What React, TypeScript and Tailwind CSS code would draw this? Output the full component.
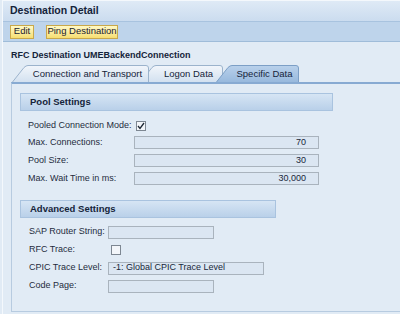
import React from 'react';

const font = "font-['Liberation_Sans',Arial,sans-serif]";

type TabProps = { label: string; width: number; active?: boolean; z: string; ml: string };

const Tab: React.FC<TabProps> = ({ label, width, active, z, ml }) => {
  const w = width;
  const fill = active ? 'url(#tabActive)' : 'url(#tabIdle)';
  const stroke = active ? '#7c9fc6' : '#9bb3cc';
  return (
    <div className={`relative h-[17px] shrink-0 ${z} ${ml}`} style={{ width: w }}>
      <svg className="absolute inset-0" width={w} height={17} viewBox={`0 0 ${w} 17`}>
        <defs>
          <linearGradient id="tabIdle" x1="0" y1="0" x2="0" y2="1">
            <stop offset="0" stopColor="#f2f6fb" />
            <stop offset="1" stopColor="#d3e1f0" />
          </linearGradient>
          <linearGradient id="tabActive" x1="0" y1="0" x2="0" y2="1">
            <stop offset="0" stopColor="#b9d1eb" />
            <stop offset="1" stopColor="#98b9dd" />
          </linearGradient>
        </defs>
        <path
          d={`M0.5 17 L12 2.5 Q14 0.5 16 0.5 L${w - 3} 0.5 Q${w - 0.5} 0.5 ${w - 0.5} 3 L${w - 0.5} 17`}
          fill={fill}
          stroke={stroke}
          strokeWidth="1"
        />
      </svg>
      <span className="relative flex h-full items-center justify-center whitespace-nowrap pl-[14px] pt-[1px] text-[9.5px] text-[#15243a]">
        {label}
      </span>
    </div>
  );
};

const Field: React.FC<{ value?: string; width: string; right?: boolean }> = ({ value = '', width, right }) => (
  <div
    className={`flex h-[13px] shrink-0 ${width} items-center whitespace-nowrap border border-[#a9b3bd] bg-[#dbe6f2] px-[4px] text-[9px] text-[#18263a] ${right ? 'justify-end pr-[12px]' : ''}`}
  >
    {value}
  </div>
);

const Check: React.FC<{ checked?: boolean }> = ({ checked }) => (
  <div className="flex h-[10px] w-[10px] shrink-0 items-center justify-center border border-[#7d8792] bg-[#f3f6fa]">
    {checked && (
      <svg width="8" height="8" viewBox="0 0 8 8">
        <path d="M1 4 L3 6.5 L7 1" fill="none" stroke="#1d2733" strokeWidth="1.3" />
      </svg>
    )}
  </div>
);

const GroupHeader: React.FC<{ title: string; width: string }> = ({ title, width }) => (
  <div
    className={`flex h-[18px] ${width} items-center whitespace-nowrap border border-[#a9c3df] bg-gradient-to-b from-[#d6e5f4] to-[#b9d0e9] pl-[9px] text-[9.5px] font-bold text-[#15243a]`}
  >
    {title}
  </div>
);

const Label: React.FC<{ text: string; width: string }> = ({ text, width }) => (
  <span className={`${width} shrink-0`}>{text}</span>
);

export default function App() {
  return (
    <div className={`h-[314px] w-[400px] overflow-hidden bg-[#e1ebf5] ${font}`}>
      <div className="ml-[2px] flex h-full flex-col border-l border-t border-[#f4f8fc]">
        {/* title bar */}
        <div className="flex h-[21px] items-center whitespace-nowrap border-b border-[#a8c3df] bg-gradient-to-b from-[#dfeaf6] to-[#cbdcef] pl-[7px] text-[10.5px] font-bold text-[#14233a]">
          Destination Detail
        </div>
        {/* toolbar */}
        <div className="flex h-[20px] items-center gap-[12px] border-b border-[#9fbcd9] bg-[#bed4eb] pl-[7px]">
          <button className="flex h-[14px] w-[24px] items-center justify-center whitespace-nowrap border border-[#c9a84a] bg-gradient-to-b from-[#fff9c6] to-[#f6de70] text-[9.5px] text-[#1b2230]">
            Edit
          </button>
          <button className="flex h-[14px] w-[72px] items-center justify-center whitespace-nowrap border border-[#c9a84a] bg-gradient-to-b from-[#fff9c6] to-[#f6de70] text-[9.5px] text-[#1b2230]">
            Ping Destination
          </button>
        </div>

        {/* content */}
        <div className="flex flex-1 flex-col pl-[8px] pt-[7px]">
          <div className="whitespace-nowrap pb-[3px] text-[9px] font-bold leading-[13px] text-[#14233a]">
            RFC Destination UMEBackendConnection
          </div>
          {/* tabs */}
          <div className="flex h-[17px] items-end">
            <Tab label="Connection and Transport" width={137} z="z-[3]" ml="ml-[1px]" />
            <Tab label="Logon Data" width={83} z="z-[2]" ml="-ml-[9px]" />
            <Tab label="Specific Data" width={83} active z="z-[4]" ml="-ml-[7px]" />
          </div>
          {/* panel */}
          <div className="mb-[2px] flex flex-1 flex-col border-b border-l border-t-2 border-b-[#b7cbe0] border-l-[#b7cbe0] border-t-[#87aad2] pb-[10px] pl-[8px] pt-[9px]">
            <GroupHeader title="Pool Settings" width="w-[313px]" />
            <div className="flex flex-col whitespace-nowrap pl-[8px] text-[9px] text-[#1f2c3d]">
              <div className="mt-[7px] flex h-[15px] items-center">
                <Label text="Pooled Connection Mode:" width="w-[108px]" />
                <Check checked />
              </div>
              <div className="mt-[3px] flex h-[13px] items-center">
                <Label text="Max. Connections:" width="w-[106px]" />
                <Field value="70" width="w-[185px]" right />
              </div>
              <div className="mt-[5px] flex h-[13px] items-center">
                <Label text="Pool Size:" width="w-[106px]" />
                <Field value="30" width="w-[185px]" right />
              </div>
              <div className="mt-[5px] flex h-[13px] items-center">
                <Label text="Max. Wait Time in ms:" width="w-[106px]" />
                <Field value="30,000" width="w-[185px]" right />
              </div>
            </div>

            <div className="mt-[15px]">
              <GroupHeader title="Advanced Settings" width="w-[256px]" />
            </div>
            <div className="flex flex-col whitespace-nowrap pl-[9px] text-[9px] text-[#1f2c3d]">
              <div className="mt-[7px] flex h-[14px] items-center">
                <Label text="SAP Router String:" width="w-[79px]" />
                <Field width="w-[106px]" />
              </div>
              <div className="mt-[4px] flex h-[14px] items-center">
                <Label text="RFC Trace:" width="w-[82px]" />
                <Check />
              </div>
              <div className="mt-[4px] flex h-[14px] items-center">
                <Label text="CPIC Trace Level:" width="w-[79px]" />
                <Field value="-1: Global CPIC Trace Level" width="w-[156px]" />
              </div>
              <div className="mt-[4px] flex h-[14px] items-center">
                <Label text="Code Page:" width="w-[79px]" />
                <Field width="w-[106px]" />
              </div>
            </div>
          </div>
        </div>
      </div>
    </div>
  );
}
